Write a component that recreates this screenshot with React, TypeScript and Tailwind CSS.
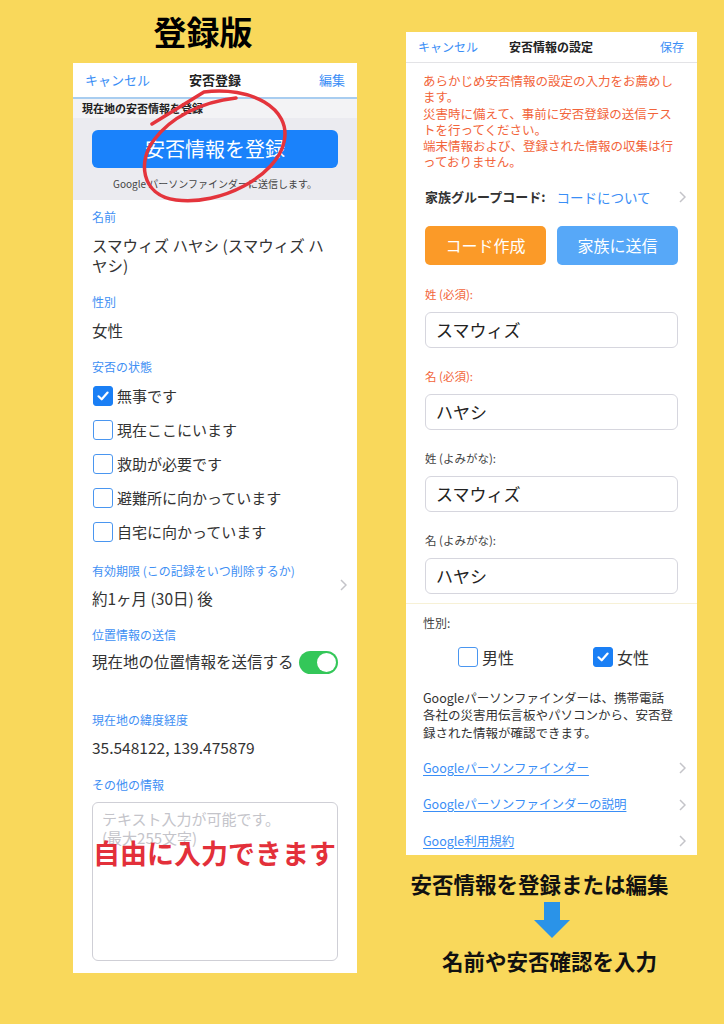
import React from 'react';

const Check: React.FC<{ checked?: boolean }> = ({ checked }) => (
  <span
    className={`flex h-[20px] w-[20px] shrink-0 items-center justify-center rounded-[3px] border-[1.5px] ${
      checked ? 'border-[#1a7ff5] bg-[#1a7ff5]' : 'border-[#4a96f0] bg-white'
    }`}
  >
    {checked && (
      <svg width="14" height="14" viewBox="0 0 14 14">
        <path d="M2.5 7.3 L5.7 10.3 L11.6 3.6" fill="none" stroke="white" strokeWidth="2.2" strokeLinecap="round" strokeLinejoin="round" />
      </svg>
    )}
  </span>
);

const Chevron = () => (
  <svg width="7" height="12" viewBox="0 0 7 12" className="shrink-0">
    <path d="M1 1 L6 6 L1 11" fill="none" stroke="#c4c4c9" strokeWidth="1.5" />
  </svg>
);

const Label: React.FC<{ children: React.ReactNode; className?: string }> = ({ children, className = '' }) => (
  <p className={`text-[12px] leading-[16px] text-[#3f90f4] ${className}`}>{children}</p>
);

const statuses = ['無事です', '現在ここにいます', '救助が必要です', '避難所に向かっています', '自宅に向かっています'];

const fields = [
  { label: '姓 (必須):', value: 'スマウィズ', required: true },
  { label: '名 (必須):', value: 'ハヤシ', required: true },
  { label: '姓 (よみがな):', value: 'スマウィズ', required: false },
  { label: '名 (よみがな):', value: 'ハヤシ', required: false },
];

const links = ['Googleパーソンファインダー', 'Googleパーソンファインダーの説明', 'Google利用規約'];

export default function App() {
  return (
    <div className="relative flex h-[1024px] w-[724px] overflow-hidden bg-[#f9d85b] font-['Noto_Sans_CJK_JP',sans-serif] text-[#333]">
      {/* left: 登録版 */}
      <div className="ml-[73px] flex w-[284px] flex-col">
        <div className="flex h-[63px] items-center justify-center pr-[24px] text-[33px] font-bold leading-none text-black">登録版</div>
        <div className="h-[910px] bg-white">
          <div className="grid h-[34px] grid-cols-3 items-center px-[12px] text-[13px]">
            <span className="text-[#3a8ef6]">キャンセル</span>
            <span className="text-center font-bold text-[#222]">安否登録</span>
            <span className="text-right text-[#3a8ef6]">編集</span>
          </div>
          <div className="h-[2px] bg-[#a8cdf0]" />
          <div className="flex h-[19px] items-center bg-[#f3f3f5] px-[9px] text-[11px] font-bold text-[#222]">現在地の安否情報を登録</div>
          <div className="h-[82px] bg-[#ebebf0] px-[19px] pt-[12px]">
            <div className="flex h-[38px] items-center justify-center rounded-[6px] bg-[#1a82fb] text-[20px] text-white">安否情報を登録</div>
            <p className="mt-[9px] text-center text-[10px] leading-[14px] text-[#444]">Google パーソンファインダーに送信します。</p>
          </div>

          <div className="px-[19px] pt-[9px] text-[15.5px]">
            <Label>名前</Label>
            <p className="mt-[10px] leading-[20px]">
              スマウィズ ハヤシ (スマウィズ ハ
              <br />
              ヤシ)
            </p>

            <Label className="mt-[19px]">性別</Label>
            <p className="mt-[10px] leading-[20px]">女性</p>

            <Label className="mt-[19px]">安否の状態</Label>
            <div className="mt-[9px] flex flex-col gap-[10px]">
              {statuses.map((s, i) => (
                <div key={s} className="flex h-[24px] items-center gap-[4px] pl-[1px] text-[15px]">
                  <Check checked={i === 0} />
                  <span>{s}</span>
                </div>
              ))}
            </div>

            <Label className="mt-[19px]">有効期限 (この記録をいつ削除するか)</Label>
            <div className="-mr-[9px] mt-[9px] flex items-center justify-between">
              <p className="leading-[20px]">約1ヶ月 (30日) 後</p>
              <div className="-mt-[26px]">
                <Chevron />
              </div>
            </div>

            <Label className="mt-[19px]">位置情報の送信</Label>
            <div className="mt-[7px] flex h-[24px] items-center justify-between">
              <span className="whitespace-nowrap">現在地の位置情報を送信する</span>
              <span className="flex h-[23px] w-[39px] shrink-0 items-center justify-end rounded-full bg-[#34c759] px-[2px]">
                <span className="h-[19px] w-[19px] rounded-full bg-white" />
              </span>
            </div>

            <Label className="mt-[38px]">現在地の緯度経度</Label>
            <p className="mt-[9px] leading-[20px]">35.548122, 139.475879</p>

            <Label className="mt-[20px]">その他の情報</Label>
            <div className="relative mt-[9px] h-[159px] rounded-[6px] border border-[#cfcfd6] px-[9px] pt-[6px] text-[15px] leading-[19px] text-[#c4c4ca]">
              <p>テキスト入力が可能です。</p>
              <p>(最大255文字)</p>
              <span className="absolute left-0 top-[33px] whitespace-nowrap text-[27px] font-bold leading-[34px] text-[#e3303a]">自由に入力できます</span>
            </div>
          </div>
        </div>
      </div>

      {/* right: 安否情報の設定 */}
      <div className="ml-[49px] flex w-[291px] flex-col pt-[32px]">
        <div className="h-[823px] bg-white">
          <div className="grid h-[31px] grid-cols-[1fr_auto_1fr] items-center border-b border-[#e3e3e6] pl-[12px] pr-[13px] text-[12px]">
            <span className="text-[#3a8ef6]">キャンセル</span>
            <span className="font-bold text-[#222]">安否情報の設定</span>
            <span className="text-right text-[#3a8ef6]">保存</span>
          </div>
          <div className="pl-[17px] pt-[10px] text-[12.5px] leading-[16.3px] text-[#f2643a]">
            あらかじめ安否情報の設定の入力をお薦めし
            <br />
            ます。
            <br />
            災害時に備えて、事前に安否登録の送信テス
            <br />
            トを行ってください。
            <br />
            端末情報および、登録された情報の収集は行
            <br />
            っておりません。
          </div>

          <div className="mt-[16px] flex h-[20px] items-center pl-[19px] pr-[11px]">
            <span className="text-[13px] font-bold text-[#333]">家族グループコード:</span>
            <span className="ml-[11px] text-[13.5px] text-[#3a8ef6]">コードについて</span>
            <span className="ml-auto">
              <Chevron />
            </span>
          </div>

          <div className="mt-[19px] flex gap-[11px] px-[19px]">
            <div className="flex h-[39px] w-[121px] items-center justify-center rounded-[5px] bg-[#fb9a28] text-[16px] text-white">コード作成</div>
            <div className="flex h-[39px] w-[121px] items-center justify-center rounded-[5px] bg-[#57a8f8] text-[16px] text-white">家族に送信</div>
          </div>

          <div className="flex flex-col px-[19px] pt-[21px]">
            {fields.map((f, i) => (
              <div key={i} className={i > 0 ? 'mt-[20px]' : ''}>
                <p className={`text-[11.5px] leading-[16px] ${f.required ? 'text-[#f2643a]' : 'text-[#444]'}`}>{f.label}</p>
                <div className="mt-[10px] flex h-[36px] items-center rounded-[6px] border border-[#d6d6de] px-[10px] text-[17px] text-[#222]">{f.value}</div>
              </div>
            ))}
          </div>

          <div className="mt-[9px] h-[1px] bg-[#f7f1d6]" />

          <p className="mt-[11px] pl-[17px] text-[12px] leading-[16px] text-[#444]">性別:</p>
          <div className="mt-[14px] flex items-center pl-[52px] text-[16px]">
            <div className="flex items-center gap-[4px]">
              <Check />
              <span>男性</span>
            </div>
            <div className="ml-[79px] flex items-center gap-[4px]">
              <Check checked />
              <span>女性</span>
            </div>
          </div>

          <p className="mt-[20px] px-[17px] text-[12.5px] leading-[17.5px] text-[#333]">
            Googleパーソンファインダーは、携帯電話
            <br />
            各社の災害用伝言板やパソコンから、安否登
            <br />
            録された情報が確認できます。
          </p>

          <div className="mt-[17px] flex flex-col gap-[16.5px] pl-[17px] pr-[11px]">
            {links.map((l) => (
              <div key={l} className="flex h-[20px] items-center justify-between">
                <span className="text-[12.5px] text-[#3a8ef6] underline underline-offset-2">{l}</span>
                <Chevron />
              </div>
            ))}
          </div>
        </div>

        <p className="mt-[16px] pr-[24px] text-center text-[21.5px] font-bold leading-[26px] text-[#111]">安否情報を登録または編集</p>
        <div className="mt-[5px] flex justify-center">
          <svg width="36" height="36" viewBox="0 0 36 36">
            <path d="M10 0 H26 V18 H36 L18 36 L0 18 H10 Z" fill="#2a93e8" />
          </svg>
        </div>
        <p className="mt-[10px] pr-[4px] text-center text-[21.5px] font-bold leading-[26px] text-[#111]">名前や安否確認を入力</p>
      </div>

      {/* hand-drawn red circle over the register button */}
      <svg className="pointer-events-none absolute left-0 top-0" width="724" height="1024" viewBox="0 0 724 1024">
        <path
          d="M152 124 L204 92 C250 86 292 108 284 142 C277 176 220 206 176 200 C140 195 138 160 154 140 C170 118 200 102 236 98"
          fill="none"
          stroke="#e4343c"
          strokeWidth="3.5"
          strokeLinecap="round"
          strokeLinejoin="round"
        />
      </svg>
    </div>
  );
}
